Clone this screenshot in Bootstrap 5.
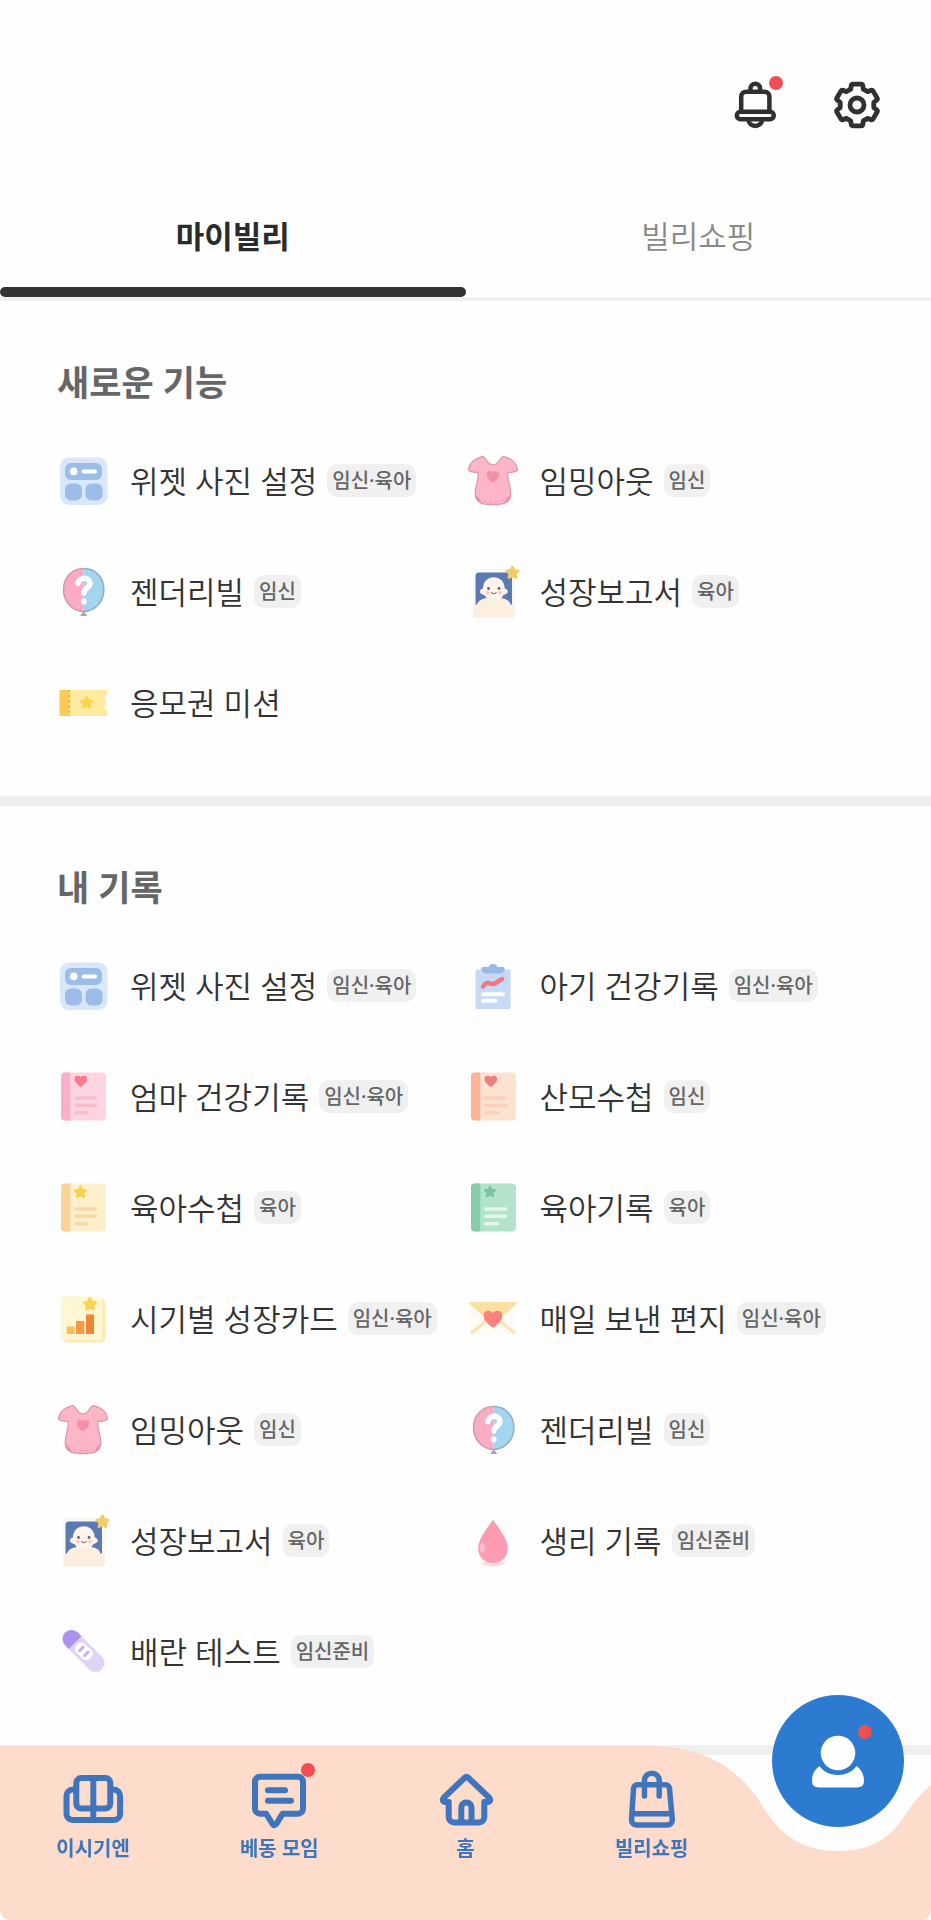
<!DOCTYPE html>
<html lang="ko">
<head>
<meta charset="utf-8">
<meta name="viewport" content="width=device-width, initial-scale=1">
<title>마이빌리</title>
<link href="https://cdn.jsdelivr.net/npm/bootstrap@5.3.0/dist/css/bootstrap.min.css" rel="stylesheet">
<style>
  :root { --ink: #333; --grey: #666; --line: #f0f0f0; --peach: #fddccb; --blue: #3e75bd; --red: #f04e50; }
  body { background: #fefefe; color: var(--ink); font-family: "Noto Sans", "Noto Sans CJK KR", sans-serif; padding-bottom: 165px; }
  a { color: inherit; text-decoration: none; }
  svg { display: block; flex: none; }

  .topbar { padding: 73px 42px 49px; gap: 38px; }
  .icon-btn { width: 64px; height: 64px; padding: 0; border: 0; background: none; color: #303030; }
  .dot { position: absolute; width: 14px; height: 14px; border-radius: 50%; background: var(--red); }
  .icon-btn .dot { left: 46px; top: 3px; }

  .tabs { border-bottom: 4px solid var(--line); }
  .tabs .nav-link { padding: 0; color: #888; font-size: 31px; line-height: 44px; text-align: center; font-weight: 350; }
  .tabs .nav-link span { display: block; padding: 28px 0 29px; }
  .tabs .nav-link::after { content: ""; display: block; height: 10px; border-radius: 5px; }
  .tabs .nav-link.active { color: #2b2b2b; font-weight: 700; }
  .tabs .nav-link.active::after { background: var(--ink); }

  .menu { padding: 56px 57px 38px 55px; border-bottom: 10px solid #efefef; }
  .menu h2 { margin: 0 2px 16px; font-size: 35px; line-height: 52px; font-weight: 700; color: var(--grey); }
  .menu-item { height: 111px; font-size: 31px; line-height: 44px; font-weight: 350; white-space: nowrap; }
  .menu-item svg { width: 56px; height: 56px; margin-right: 19px; }
  .tag { margin-left: 10px; padding: 0 5px; border-radius: 10px; background: var(--line); color: var(--grey); font-family: "Noto Sans", "Noto Sans CJK KR Medium", "Noto Sans CJK KR", sans-serif; font-size: 20px; line-height: 33px; font-weight: 500; }

  .bk-pink { --page: #fdd5e0; --spine: #f8b0c8; --rule: #f9bccb; }
  .bk-peach { --page: #fee2d1; --spine: #fcb398; --rule: #fdcfba; }
  .bk-yellow { --page: #feefcd; --spine: #f9d398; --rule: #f8d9a5; }
  .bk-green { --page: #b3e4cb; --spine: #86cbab; --rule: #e3f6ec; }

  .tabbar { height: 174px; padding-top: 21px; }
  .tabbar-bg { position: absolute; inset: 0; z-index: -1; border-radius: 0 0 10px 10px; overflow: hidden; }
  .tabbar-bg div { background: var(--peach); }
  .tabbar li { flex: 1 1 0; }
  .tabbar-link { color: var(--blue); font-size: 20px; line-height: 28px; font-weight: 700; gap: 4px; }
  .tabbar-link svg { width: 64px; height: 64px; }
  .tabbar-link .dot { left: 54px; top: -4px; }
  .fab { width: 132px; height: 132px; margin-top: -72px; border-radius: 50%; background: #2c7bd0; }
  .fab .dot { left: 86px; top: 30px; }
</style>
</head>
<body>

<svg width="0" height="0" class="position-absolute" aria-hidden="true">
  <symbol id="star" viewBox="-10 -10 20 20"><path d="M0-7.500 2.300-2.800 7.500-2 3.700 1.600 4.700 6.800 0 4.300-4.700 6.800-3.700 1.600-7.500-2-2.300-2.800Z" fill="currentColor" stroke="currentColor" stroke-width="3.500" stroke-linejoin="round"/></symbol>
  <symbol id="heart" viewBox="0 0 20 18"><path d="M10 18C6 15 0 10.500 0 5.500 0 2 2.500 0 5.300 0 7.300 0 9 1 10 2.800 11 1 12.700 0 14.700 0 17.500 0 20 2 20 5.500 20 10.500 14 15 10 18Z" fill="currentColor"/></symbol>

  <symbol id="i-widget" viewBox="0 0 56 56">
    <rect x="5" y="4.500" width="47.500" height="47.500" rx="9" fill="#d8e7f9"/>
    <g fill="#9bbde7"><rect x="10" y="10" width="37" height="17" rx="6"/><rect x="10" y="30.500" width="17" height="17" rx="6"/><rect x="30.500" y="30.500" width="17" height="17" rx="6"/></g>
    <circle cx="18.700" cy="18.400" r="3.800" fill="#fff"/><path d="M28.500 18.400h11.500" stroke="#fff" stroke-width="4" stroke-linecap="round"/>
  </symbol>
  <symbol id="i-balloon" viewBox="0 0 56 56">
    <path d="M28.700 47l3.600 5h-7.200z" fill="#a9a3b0"/>
    <path d="M28.700 4.500C16.500 4.500 8.500 14 8.500 25.500S17 47.500 28.700 47.500Z" fill="#fbabc2"/>
    <path d="M28.700 4.500C41 4.500 48.900 14 48.900 25.500S40.500 47.500 28.700 47.500Z" fill="#a3d4f0"/>
    <path d="M28.700 4.500C16.500 4.500 8.500 14 8.500 25.500S17 47.500 28.700 47.500" fill="none" stroke="#cb9bae" stroke-width="1.500"/>
    <path d="M28.700 4.500C41 4.500 48.900 14 48.900 25.500S40.500 47.500 28.700 47.500" fill="none" stroke="#8bafc6" stroke-width="1.500"/>
    <path d="M23 19.500c.5-7 12-7 12 0 0 4.500-6 4.500-6.300 9.500" fill="none" stroke="#fff" stroke-width="5.500" stroke-linecap="round"/><circle cx="28.600" cy="37.500" r="3" fill="#fff"/>
  </symbol>
  <symbol id="i-ticket" viewBox="0 0 56 56">
    <path d="M14 15h38.500v3.500l-3 4 1.500 5-1.500 5 3 4V41H14z" fill="#fdeb9f"/>
    <path d="M5.500 15H14v26H5.500q-1 0-1-1V16q0-1 1-1z" fill="#fbcb55"/>
    <path d="M14.300 15v26" stroke="#ecb347" stroke-width="1.600" stroke-dasharray="3 2"/>
    <use href="#star" x="24.700" y="20.500" width="14" height="14" color="#f9d44c"/>
  </symbol>
  <symbol id="i-onesie" viewBox="0 0 56 56">
    <path d="M16.200 3.800C18.500 3 19.500 4 21 6.500 23 10 25.500 11.800 28 11.800S33 10 35 6.500C36.500 4 37.500 3 39.800 3.800 46 5.500 51.500 9.500 52.500 16.500 51.800 19 46 19.600 43 19.400 41.500 27 46.500 33 45.700 42 45 49.500 39 51.500 28 51.500S11 49.500 10.300 42C9.500 33 14.500 27 13 19.400 10 19.600 4.200 19 3.500 16.500 4.500 9.500 10 5.500 16.200 3.800Z" fill="#fdb6c8" stroke="#de99ae" stroke-width="1.300"/>
    <path d="M10.500 41.500c3 2 5.500 6 6.500 9-4-1-6.300-4-6.500-9zM45.500 41.500c-3 2-5.500 6-6.500 9 4-1 6.300-4 6.500-9z" fill="#ec93aa"/>
    <path d="M18 47.500q10 2.500 20 0" fill="none" stroke="#f095ab" stroke-dasharray="3 3"/>
    <use href="#heart" x="21.500" y="18" width="13" height="11.500" color="#f38fa6"/>
  </symbol>
  <symbol id="i-portrait" viewBox="0 0 56 56">
    <rect x="8" y="5" width="42" height="49" rx="3" fill="#fbf7f1"/>
    <path d="M14 8.500h33V41H10.500V12q0-3.500 3.500-3.500z" fill="#5b7ab2"/>
    <path d="M8.300 53.500V40.500H12c1.500-4.500 6-6 10.500-6.500h13c4.500.5 9 2 10 6.500h4V53.500z" fill="#fcefe0"/>
    <circle cx="28.800" cy="24" r="10.800" fill="#fdf5ec"/><ellipse cx="28.800" cy="27.500" rx="14" ry="5" fill="#fdf5ec"/><path d="M19 27h20c0 6-4 9.500-10 9.500S19 33 19 27z" fill="#fdf5ec"/>
    <circle cx="23.500" cy="24.500" r="1.400" fill="#6e5a80"/><circle cx="34" cy="24.500" r="1.400" fill="#6e5a80"/>
    <path d="M26 28.500q2.800 2.500 5.600 0" fill="none" stroke="#6e5a6a" stroke-width="1"/>
    <circle cx="22.500" cy="28.800" r="1.700" fill="#fac3c6"/><circle cx="35" cy="28.800" r="1.700" fill="#fac3c6"/>
    <use href="#star" x="40" y="1" width="15" height="15" color="#f1cd67"/>
  </symbol>
  <symbol id="i-clipboard" viewBox="0 0 56 56">
    <rect x="10.500" y="11.500" width="35" height="39.500" rx="1.500" fill="#c6daf4"/>
    <path d="M18 9h5.500c1-4 8-4 9 0H38q1.700 0 1.700 1.700c0 3-2.700 4.800-5 4.800H21.300c-2.300 0-5-1.800-5-4.800Q16.300 9 18 9z" fill="#94baea"/>
    <path d="M18 28.500c5-7 6-1.500 11-2.500l8-5" fill="none" stroke="#f0788b" stroke-width="4.500" stroke-linecap="round" stroke-linejoin="round"/>
    <path d="M18 36.200h20M18 42.800h12.500" stroke="#fff" stroke-width="4" stroke-linecap="round"/>
  </symbol>
  <symbol id="i-book" viewBox="0 0 56 56">
    <rect x="6" y="3.500" width="45" height="48" rx="4" fill="var(--page)"/>
    <path d="M10 3.500h5.300v48H10q-4 0-4-4v-40q0-4 4-4z" fill="var(--spine)"/>
    <path d="M21 29h19.500M21 36.300h19.500M21 43.700h11.500" stroke="var(--rule)" stroke-width="3.500" stroke-linecap="round"/>
  </symbol>
  <symbol id="i-growth" viewBox="0 0 56 56">
    <rect x="8" y="7.500" width="42.500" height="44" rx="5" fill="#fce9ae"/><rect x="6" y="5.500" width="41.500" height="43.500" rx="3" fill="#fff7d3"/>
    <path d="M11.700 35.500h8V43h-8z" fill="#fabd5c"/><path d="M21 30h8.300v13H21z" fill="#f29c47"/><path d="M31 23.500h8V43h-8z" fill="#ee8636"/>
    <use href="#star" x="27.500" y="5.500" width="15" height="15" color="#f8d552"/>
  </symbol>
  <symbol id="i-letter" viewBox="0 0 56 56">
    <path d="M4.500 12v31h47V12z" fill="#fffcf6"/>
    <path d="M6 42.500 21 30M50 42.500 35 30" stroke="#fce3b2" stroke-width="3"/>
    <path d="M5 11h46q1.500 1 0 2.500L31 31q-3 2.500-6 0L5 13.500Q3.500 12 5 11z" fill="#fbe0a2"/>
    <use href="#heart" x="18.500" y="19.500" width="19" height="17.500" color="#fb827f"/>
  </symbol>
  <symbol id="i-drop" viewBox="0 0 56 56">
    <ellipse cx="28" cy="50.500" rx="11" ry="3" fill="#fddbe1"/>
    <path d="M28 6.700C32 13 42.800 25 42.800 35.500 42.800 44.500 36 50 28 50S13.200 44.500 13.200 35.500C13.200 25 24 13 28 6.700Z" fill="#fd9bb0"/>
    <ellipse cx="17.300" cy="35" rx="2.600" ry="4.800" fill="#fdbccb"/>
  </symbol>
  <symbol id="i-test" viewBox="0 0 56 56">
    <g transform="translate(28.500 27) rotate(45)">
      <rect x="-26" y="-9" width="52" height="18" rx="9" fill="#dfd3fa"/>
      <path d="M-12-9V9h-5a9 9 0 0 1 0-18z" fill="#ac91ee"/>
      <rect x="-9" y="-6" width="19" height="12" rx="5" fill="#fff"/>
      <path d="M-3-2.500v5M4-2.500v5" stroke="#c4b2ef" stroke-width="3" stroke-linecap="round"/>
    </g>
  </symbol>
</svg>

<header class="topbar d-flex justify-content-end">
  <button type="button" class="icon-btn position-relative" aria-label="알림">
    <svg width="64" height="64" viewBox="0 0 64 64" fill="none" stroke="currentColor" stroke-width="4.500" stroke-linejoin="round">
      <path d="M27.500 18v-2.500a4.800 4.800 0 0 1 9.600 0V18M18.200 38V23.700a5 5 0 0 1 5-5h18.200a5 5 0 0 1 5 5V38M25.500 46.500c0 8.500 13.500 8.500 13.500 0"/><rect x="13.800" y="38.800" width="37" height="7.500" rx="3.700"/>
    </svg>
    <span class="dot"></span>
  </button>
  <button type="button" class="icon-btn" aria-label="설정">
    <svg width="64" height="64" viewBox="0 0 64 64" fill="none" stroke="currentColor" stroke-width="4.800" stroke-linejoin="round">
      <path d="M25.700 16.200 26.200 12.700q.2-1.500 1.700-1.500h8.200q1.500 0 1.700 1.500l.5 3.500 4.350 2.500L46 17.300q1.300-.5 2.100.8l4 6.900q.7 1.200-.4 2.100l-2.900 2.300v5.200l2.900 2.300q1.100.9.400 2.100l-4 6.900q-.8 1.300-2.100.8l-3.350-1.400-4.350 2.500-.5 3.500q-.2 1.500-1.700 1.500h-8.200q-1.500 0-1.700-1.500l-.5-3.500-4.350-2.500L18 46.700q-1.300.5-2.100-.8l-4-6.900q-.7-1.200.4-2.100l2.900-2.300v-5.200l-2.900-2.300q-1.100-.9-.4-2.100l4-6.900q.8-1.300 2.100-.8l3.350 1.400Z"/><circle cx="32" cy="32" r="7"/>
    </svg>
  </button>
</header>

<ul class="tabs nav">
  <li class="col-6"><a class="nav-link active" href="#my" aria-current="page"><span>마이빌리</span></a></li>
  <li class="col-6"><a class="nav-link" href="#shop"><span>빌리쇼핑</span></a></li>
</ul>

<main>
  <section class="menu">
    <h2>새로운 기능</h2>
    <div class="row g-0">
      <a href="#" class="menu-item col-6 d-flex align-items-center"><svg><use href="#i-widget"/></svg>위젯 사진 설정<span class="tag">임신·육아</span></a>
      <a href="#" class="menu-item col-6 d-flex align-items-center"><svg><use href="#i-onesie"/></svg>임밍아웃<span class="tag">임신</span></a>
      <a href="#" class="menu-item col-6 d-flex align-items-center"><svg><use href="#i-balloon"/></svg>젠더리빌<span class="tag">임신</span></a>
      <a href="#" class="menu-item col-6 d-flex align-items-center"><svg><use href="#i-portrait"/></svg>성장보고서<span class="tag">육아</span></a>
      <a href="#" class="menu-item col-6 d-flex align-items-center"><svg><use href="#i-ticket"/></svg>응모권 미션</a>
    </div>
  </section>

  <section class="menu">
    <h2>내 기록</h2>
    <div class="row g-0">
      <a href="#" class="menu-item col-6 d-flex align-items-center"><svg><use href="#i-widget"/></svg>위젯 사진 설정<span class="tag">임신·육아</span></a>
      <a href="#" class="menu-item col-6 d-flex align-items-center"><svg><use href="#i-clipboard"/></svg>아기 건강기록<span class="tag">임신·육아</span></a>
      <a href="#" class="menu-item col-6 d-flex align-items-center"><svg class="bk-pink" viewBox="0 0 56 56"><use href="#i-book"/><use href="#heart" x="19.300" y="6.500" width="13" height="11.500" color="#f47c8b"/></svg>엄마 건강기록<span class="tag">임신·육아</span></a>
      <a href="#" class="menu-item col-6 d-flex align-items-center"><svg class="bk-peach" viewBox="0 0 56 56"><use href="#i-book"/><use href="#heart" x="19.300" y="6.500" width="13" height="11.500" color="#ef7d85"/></svg>산모수첩<span class="tag">임신</span></a>
      <a href="#" class="menu-item col-6 d-flex align-items-center"><svg class="bk-yellow" viewBox="0 0 56 56"><use href="#i-book"/><use href="#star" x="18.500" y="5" width="14" height="14" color="#f6d150"/></svg>육아수첩<span class="tag">육아</span></a>
      <a href="#" class="menu-item col-6 d-flex align-items-center"><svg class="bk-green" viewBox="0 0 56 56"><use href="#i-book"/><use href="#star" x="18.500" y="5" width="13" height="13" color="#7bc4a0"/></svg>육아기록<span class="tag">육아</span></a>
      <a href="#" class="menu-item col-6 d-flex align-items-center"><svg><use href="#i-growth"/></svg>시기별 성장카드<span class="tag">임신·육아</span></a>
      <a href="#" class="menu-item col-6 d-flex align-items-center"><svg><use href="#i-letter"/></svg>매일 보낸 편지<span class="tag">임신·육아</span></a>
      <a href="#" class="menu-item col-6 d-flex align-items-center"><svg><use href="#i-onesie"/></svg>임밍아웃<span class="tag">임신</span></a>
      <a href="#" class="menu-item col-6 d-flex align-items-center"><svg><use href="#i-balloon"/></svg>젠더리빌<span class="tag">임신</span></a>
      <a href="#" class="menu-item col-6 d-flex align-items-center"><svg><use href="#i-portrait"/></svg>성장보고서<span class="tag">육아</span></a>
      <a href="#" class="menu-item col-6 d-flex align-items-center"><svg><use href="#i-drop"/></svg>생리 기록<span class="tag">임신준비</span></a>
      <a href="#" class="menu-item col-6 d-flex align-items-center"><svg><use href="#i-test"/></svg>배란 테스트<span class="tag">임신준비</span></a>
    </div>
  </section>
</main>

<nav class="tabbar fixed-bottom" aria-label="하단 메뉴">
  <div class="tabbar-bg d-flex" aria-hidden="true">
    <div class="flex-grow-1"></div>
    <svg width="331" height="174" viewBox="0 0 331 174"><path d="M0 0H50C95 0 128 15 153 46 168 65 182 105 238 105 292 105 302 70 316 54 321 48 326 43 331 39V174H0Z" fill="#fddccb"/></svg>
  </div>
  <ul class="list-unstyled d-flex mb-0">
    <li><a href="#" class="tabbar-link d-flex flex-column align-items-center">
      <svg viewBox="0 0 64 64" fill="none" stroke="currentColor" stroke-width="6" stroke-linejoin="round"><rect x="15.300" y="11" width="34" height="30.500" rx="5"/><path d="M32.300 11v42M15 22.500h-3a6.500 6.500 0 0 0-6.500 6.500v18a6 6 0 0 0 6 6h41.600a6 6 0 0 0 6-6V29a6.500 6.500 0 0 0-6.500-6.500h-3"/></svg>
      이시기엔</a></li>
    <li><a href="#" class="tabbar-link d-flex flex-column align-items-center">
      <span class="position-relative"><svg viewBox="0 0 64 64" fill="none" stroke="currentColor" stroke-width="6" stroke-linecap="round" stroke-linejoin="round"><path d="M13 9.700h38a5 5 0 0 1 5 5v27a5 5 0 0 1-5 5H35.700l-6.200 10q-2 3-4.200 0L19.200 46.700H13a5 5 0 0 1-5-5v-27a5 5 0 0 1 5-5zM21 23.300h17M21 33.700h23"/></svg><span class="dot"></span></span>
      베동 모임</a></li>
    <li><a href="#" class="tabbar-link d-flex flex-column align-items-center">
      <svg viewBox="0 0 64 64" fill="none" stroke="currentColor" stroke-width="6" stroke-linecap="round" stroke-linejoin="round"><path d="M14.700 35v15a5.500 5.500 0 0 0 5.500 5.500h24.600a5.500 5.500 0 0 0 5.500-5.500V35h3.500q4-1 1.500-4.300L34 10.500q-1.500-1.400-3 0L9.700 30.700Q7.200 34 11.200 35zM27.300 55V40.500a5 5 0 0 1 10.200 0V55"/></svg>
      홈</a></li>
    <li><a href="#" class="tabbar-link d-flex flex-column align-items-center">
      <svg viewBox="0 0 64 64" fill="none" stroke="currentColor" stroke-width="5.500" stroke-linecap="round" stroke-linejoin="round"><path d="M17.500 17.800h28a4 4 0 0 1 4 4L52.300 53a5 5 0 0 1-5 5H16.500a5 5 0 0 1-5-5l2-31.200a4 4 0 0 1 4-4zM12 46.700h40M24.500 29V13.500a7.300 7.300 0 0 1 14.700 0V29"/></svg>
      빌리쇼핑</a></li>
    <li class="d-flex justify-content-center"><a href="#" class="fab position-relative" aria-label="마이페이지">
      <svg width="132" height="132" viewBox="0 0 132 132" fill="#fff"><circle cx="66" cy="58" r="17.300"/><path d="M47.500 71c8 12 29 12 37 0 5 3.500 7.500 9 7.500 15q0 6.500-7 6.500H47q-7 0-7-6.500c0-6 2.500-11.500 7.500-15z"/></svg>
      <span class="dot"></span></a></li>
  </ul>
</nav>

<script src="https://cdn.jsdelivr.net/npm/bootstrap@5.3.0/dist/js/bootstrap.bundle.min.js"></script>
</body>
</html>
